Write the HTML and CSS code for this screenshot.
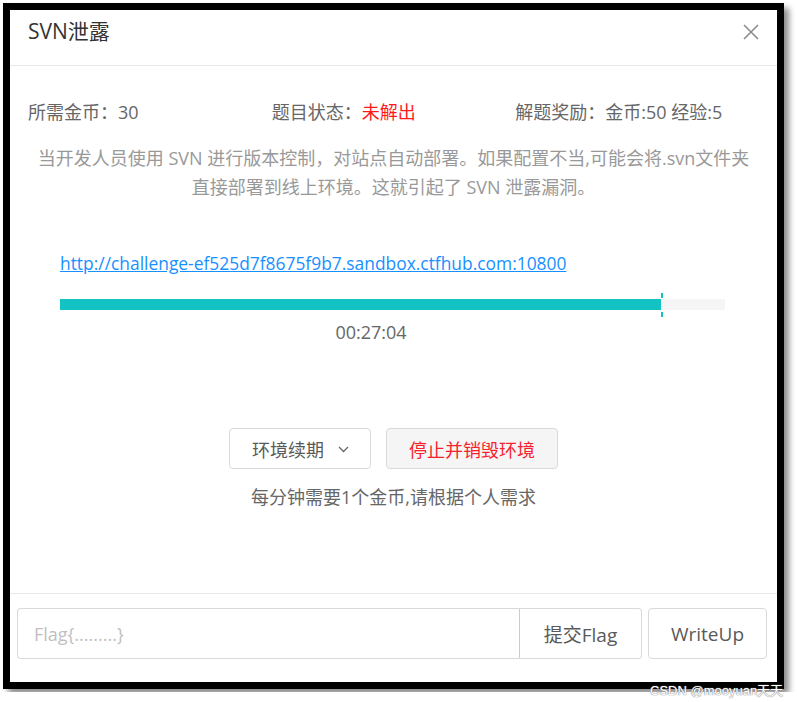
FILE: index.html
```html
<!DOCTYPE html>
<html lang="zh-CN">
<head>
  <meta charset="UTF-8" />
  <meta name="viewport" content="width=device-width, initial-scale=1" />
  <title>SVN泄露</title>
  <link rel="stylesheet" href="styles.css">
</head>
<body>
  <div class="frame">
    <div class="modal">
      <div class="modal-header">
        <span class="modal-title">SVN泄露</span>
        <svg class="modal-close" width="18" height="18" viewBox="0 0 18 18">
          <path d="M2 2 L16 16 M16 2 L2 16" stroke="#8c8c8c" stroke-width="1.6" fill="none"/>
        </svg>
      </div>

      <div class="modal-body">
        <div class="info-row">
          <div class="info-col">所需金币：30</div>
          <div class="info-col">题目状态：<span class="status">未解出</span></div>
          <div class="info-col">解题奖励：金币:50 经验:5</div>
        </div>

        <p class="desc">当开发人员使用 SVN 进行版本控制，对站点自动部署。如果配置不当,可能会将.svn文件夹<br>直接部署到线上环境。这就引起了 SVN 泄露漏洞。</p>

        <div class="env">
          <a class="env-link" href="#">http://challenge-ef525d7f8675f9b7.sandbox.ctfhub.com:10800</a>
          <div class="progress">
            <div class="progress-bar" style="width: 90.4%"><span class="progress-mark"></span></div>
          </div>
          <div class="timer">00:27:04</div>
        </div>

        <div class="actions">
          <button type="button" class="btn">环境续期
            <svg class="chevron" width="11" height="7" viewBox="0 0 11 7">
              <path d="M1 1 L5.5 5.5 L10 1" stroke="#666" stroke-width="1.3" fill="none"/>
            </svg>
          </button>
          <button type="button" class="btn btn-danger">停止并销毁环境</button>
        </div>
        <div class="tip">每分钟需要1个金币,请根据个人需求</div>
      </div>

      <div class="modal-footer">
        <div class="flag-group">
          <input type="text" class="flag-input" placeholder="Flag{.........}">
          <button type="button" class="btn-addon">提交Flag</button>
        </div>
        <button type="button" class="btn-writeup">WriteUp</button>
      </div>
    </div>
  </div>
  <div class="watermark">CSDN @mooyuan天天</div>
</body>
</html>
```

FILE: styles.css
```css
body {
  margin: 0;
  background: #fff;
  font-family: "Open Sans", "Noto Sans CJK SC", sans-serif;
  font-size: 18px;
  color: #666;
}
.frame {
  margin: 3px;
  width: 767px;
  height: 672px;
  border: 7px solid #000;
  box-shadow: 5px 5px 6px rgba(0,0,0,0.45);
  background: #fff;
  overflow: hidden;
}
.modal {
  height: 100%;
  display: flex;
  flex-direction: column;
}
.modal-header {
  height: 56px;
  box-sizing: border-box;
  border-bottom: 1px solid #e8e8e8;
  display: flex;
  align-items: flex-start;
  justify-content: space-between;
  padding: 7px 17px 0 18px;
}
.modal-title {
  font-size: 21px;
  line-height: 28px;
  color: #333;
}
.modal-close {
  margin-top: 6px;
}
.modal-body {
  flex: 1;
  padding: 32px 18px 0;
}
.info-row {
  display: flex;
  line-height: 28px;
}
.info-col {
  flex: 1;
}
.status {
  color: #ff1a1a;
}
.desc {
  margin: 18px -10px 0;
  line-height: 29px;
  text-align: center;
  color: #999;
  white-space: nowrap;
}
.env {
  margin-top: 47px;
  padding: 0 34px 0 32px;
}
.env-link {
  display: inline-block;
  line-height: 28px;
  font-size: 17.4px;
  color: #1890ff;
  text-decoration: underline;
}
.progress {
  margin-top: 22px;
  height: 11px;
  background: #f5f5f5;
}
.progress-bar {
  position: relative;
  height: 100%;
  background: #13c2c2;
}
.progress-mark::before,
.progress-mark::after {
  content: "";
  position: absolute;
  right: -2px;
  width: 2px;
  height: 5px;
  background: #13c2c2;
}
.progress-mark::before {
  top: -6px;
}
.progress-mark::after {
  bottom: -7px;
}
.timer {
  margin: 8px 43px 0 0;
  line-height: 28px;
  text-align: center;
}
.actions {
  margin-top: 82px;
  display: flex;
  justify-content: center;
  gap: 15px;
}
.btn {
  height: 41px;
  padding: 0 21px 0 22px;
  font: inherit;
  color: #595959;
  background: #fff;
  border: 1px solid #d9d9d9;
  border-radius: 4px;
  display: flex;
  align-items: center;
  gap: 14px;
}
.chevron {
  margin-top: 2px;
}
.btn-danger {
  padding: 0 22px;
  color: #f5222d;
  background: #f5f5f5;
}
.tip {
  margin-top: 14px;
  line-height: 28px;
  text-align: center;
}
.modal-footer {
  height: 89px;
  border-top: 1px solid #e8e8e8;
  padding: 14px 10px 0 7px;
  display: flex;
  gap: 6px;
  box-sizing: border-box;
}
.flag-group {
  display: flex;
  height: 51px;
}
.flag-input {
  width: 502px;
  box-sizing: border-box;
  padding: 0 16px;
  font: inherit;
  border: 1px solid #d9d9d9;
  border-right: none;
  border-radius: 4px 0 0 4px;
  outline: none;
}
.flag-input::placeholder {
  color: #bfbfbf;
}
.btn-addon {
  width: 123px;
  font: inherit;
  font-size: 19px;
  color: #595959;
  background: #fff;
  border: 1px solid #d9d9d9;
  border-left-color: #ccc;
  border-radius: 0 4px 4px 0;
}
.btn-writeup {
  width: 119px;
  height: 51px;
  font: inherit;
  font-size: 19px;
  color: #595959;
  background: #fff;
  border: 1px solid #d9d9d9;
  border-radius: 4px;
}
.watermark {
  position: absolute;
  left: 650px;
  top: 680px;
  font-family: "Liberation Sans", "Noto Sans CJK SC", sans-serif;
  font-size: 13px;
  color: #fff;
  text-shadow: 0 0 1px #777, 0 0 1px #777;
}
```
